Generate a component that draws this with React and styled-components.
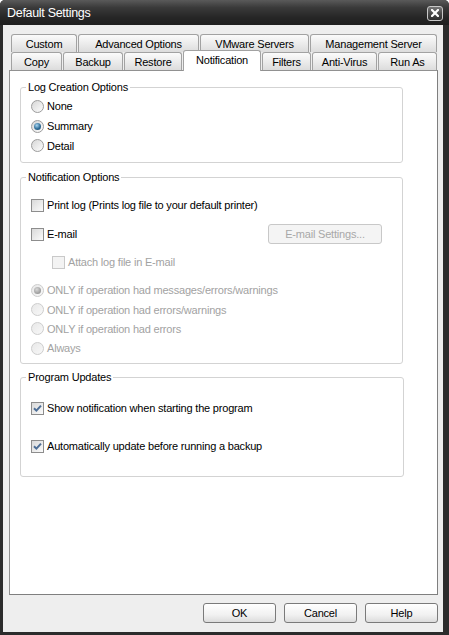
import React from "react"
import styled, {createGlobalStyle} from "styled-components"

const GlobalStyle = createGlobalStyle`
  html, body {
    margin: 0;
    padding: 0;
    background: #fff;
  }
  body {
    font-family: "Liberation Sans", Arial, sans-serif;
    font-size: 11px;
    letter-spacing: -0.2px;
    color: #000;
  }
  * {
    box-sizing: border-box;
  }
`

const backTabs = [
  {label: "Custom", w: 67},
  {label: "Advanced Options", w: 122},
  {label: "VMware Servers", w: 110},
  {label: "Management Server", w: 128},
]

const frontTabs = [
  {label: "Copy", w: 52},
  {label: "Backup", w: 61},
  {label: "Restore", w: 59},
  {label: "Notification", w: 79, active: true},
  {label: "Filters", w: 50},
  {label: "Anti-Virus", w: 66},
  {label: "Run As", w: 60},
]

const CheckMark = () => (
  <svg width="9" height="9" viewBox="0 0 9 9">
    <path d="M1 4.2 L3.4 6.6 L8 1.6" fill="none" stroke="#4d6e96" strokeWidth="2" />
  </svg>
)

const CloseIcon = () => (
  <svg width="8" height="8" viewBox="0 0 8 8">
    <path d="M1 1 L7 7 M7 1 L1 7" stroke="#fff" strokeWidth="2.2" strokeLinecap="square" />
  </svg>
)

const RadioItem = ({checked, disabled, children, ...rest}) => (
  <Row $disabled={disabled} {...rest}>
    <Radio $checked={checked} $disabled={disabled} />
    <span>{children}</span>
  </Row>
)

const CheckItem = ({checked, disabled, children, ...rest}) => (
  <Row $disabled={disabled} {...rest}>
    <Check $disabled={disabled}>{checked && <CheckMark />}</Check>
    <span>{children}</span>
  </Row>
)

const App = () => {
  return (
    <>
      <GlobalStyle />
      <Frame>
        <TitleBar>
          <Title>Default Settings</Title>
          <CloseButton>
            <CloseIcon />
          </CloseButton>
        </TitleBar>
        <Client>
          <TabRow>
            {backTabs.map((t) => (
              <Tab key={t.label} $w={t.w}>
                {t.label}
              </Tab>
            ))}
          </TabRow>
          <TabRow>
            {frontTabs.map((t) => (
              <Tab key={t.label} $w={t.w} $active={t.active}>
                {t.label}
              </Tab>
            ))}
          </TabRow>
          <Panel>
            <Group $mt={9} $pt={2} $pb={7}>
              <Legend>Log Creation Options</Legend>
              <RadioItem>None</RadioItem>
              <RadioItem checked>Summary</RadioItem>
              <RadioItem $h={19}>Detail</RadioItem>
            </Group>

            <Group $mt={7} $pt={11} $pb={5}>
              <Legend>Notification Options</Legend>
              <CheckItem>Print log (Prints log file to your default printer)</CheckItem>
              <Row $mt={9}>
                <Check />
                <span>E-mail</span>
                <Button $w={114} $disabled>
                  E-mail Settings...
                </Button>
              </Row>
              <CheckItem $mt={8} $indent={21} disabled>
                Attach log file in E-mail
              </CheckItem>
              <RadioItem $mt={8} checked disabled>
                ONLY if operation had messages/errors/warnings
              </RadioItem>
              <RadioItem $h={19} disabled>
                ONLY if operation had errors/warnings
              </RadioItem>
              <RadioItem $h={19} disabled>
                ONLY if operation had errors
              </RadioItem>
              <RadioItem disabled>Always</RadioItem>
            </Group>

            <Group $mt={6} $pt={14} $pb={20} $w={384}>
              <Legend>Program Updates</Legend>
              <CheckItem checked>Show notification when starting the program</CheckItem>
              <CheckItem $mt={18} checked>
                Automatically update before running a backup
              </CheckItem>
            </Group>
          </Panel>
          <Footer>
            <Button $w={73}>OK</Button>
            <Button $w={73}>Cancel</Button>
            <Button $w={73}>Help</Button>
          </Footer>
        </Client>
      </Frame>
    </>
  )
}

export default App

const Frame = styled.div`
  width: 449px;
  height: 635px;
  display: flex;
  flex-direction: column;
  background: #2c2c2c;
  border-radius: 5px 5px 0 0;
  overflow: hidden;
`
const TitleBar = styled.div`
  flex: none;
  height: 25px;
  display: flex;
  align-items: center;
  justify-content: space-between;
  padding: 1px 6px 0 7px;
  background: linear-gradient(#5a5a5a 0%, #3a3a3a 30%, #262626 70%, #1f1f1f 100%);
`
const Title = styled.span`
  color: #fff;
  font-size: 12.5px;
  letter-spacing: -0.3px;
`
const CloseButton = styled.div`
  width: 16px;
  height: 15px;
  display: flex;
  align-items: center;
  justify-content: center;
  border: 1px solid #c8c8c8;
  border-radius: 3px;
  background: linear-gradient(#777 0%, #4a4a4a 50%, #2e2e2e 100%);
`
const Client = styled.div`
  flex: 1;
  display: flex;
  flex-direction: column;
  margin: 0 6px 3px 3px;
  padding: 9px 5px 0 6px;
  background: #eeeeee;
`
const TabRow = styled.div`
  display: flex;
  height: 18px;
  padding-left: 2px;
`
const Tab = styled.div`
  flex: none;
  width: ${(p) => p.$w - 1}px;
  margin-right: 1px;
  display: flex;
  align-items: center;
  justify-content: center;
  border: 1px solid #a2a2a2;
  border-bottom: none;
  border-radius: 3px 3px 0 0;
  background: ${(p) =>
    p.$active ? "#fff" : "linear-gradient(#fbfbfb 0%, #ececec 50%, #dcdcdc 100%)"};
  height: ${(p) => (p.$active ? "21px" : "18px")};
  margin-top: ${(p) => (p.$active ? "-2px" : "0")};
  padding-bottom: ${(p) => (p.$active ? "3px" : "0")};
  position: relative;
  z-index: ${(p) => (p.$active ? 2 : 0)};
  white-space: nowrap;
`
const Panel = styled.div`
  height: 525px;
  display: flex;
  flex-direction: column;
  align-items: flex-start;
  padding-left: 10px;
  background: #fff;
  border: 1px solid #919191;
  border-right-color: #7f7f7f;
  border-bottom-color: #7f7f7f;
`
const Group = styled.fieldset`
  width: ${(p) => p.$w || 383}px;
  min-width: 0;
  margin: ${(p) => p.$mt}px 0 0 0;
  padding: ${(p) => p.$pt}px 20px ${(p) => p.$pb}px 10px;
  border: 1px solid #d3d3d3;
  border-radius: 3px;
`
const Legend = styled.legend`
  margin-left: -5px;
  padding: 0 2px;
  line-height: 14px;
  font-size: 11px;
`
const Row = styled.div`
  display: flex;
  align-items: center;
  gap: 3px;
  height: ${(p) => p.$h || 20}px;
  margin-top: ${(p) => p.$mt || 0}px;
  padding-left: ${(p) => p.$indent || 0}px;
  color: ${(p) => (p.$disabled ? "#a2a2a2" : "#000")};
  white-space: nowrap;
`
const Radio = styled.span`
  flex: none;
  width: 13px;
  height: 13px;
  display: flex;
  align-items: center;
  justify-content: center;
  border-radius: 50%;
  border: 1px solid ${(p) => (p.$disabled ? "#cdcdcd" : "#9c9c9c")};
  background: ${(p) =>
    p.$disabled ? "linear-gradient(135deg, #e8e8e8, #f8f8f8)" : "linear-gradient(135deg, #d6d6d6, #fdfdfd)"};

  &::after {
    content: "";
    display: ${(p) => (p.$checked ? "block" : "none")};
    width: 7px;
    height: 7px;
    border-radius: 50%;
    background: ${(p) =>
      p.$disabled
        ? "radial-gradient(circle at 40% 35%, #d8d8d8, #9a9a9a 70%)"
        : "radial-gradient(circle at 40% 35%, #a9d6f2, #2f6d97 55%, #1b4566 100%)"};
  }
`
const Check = styled.span`
  flex: none;
  width: 13px;
  height: 13px;
  display: flex;
  align-items: center;
  justify-content: center;
  border: 1px solid ${(p) => (p.$disabled ? "#c9c9c9" : "#8d8d8d")};
  background: ${(p) =>
    p.$disabled ? "#f3f3f3" : "linear-gradient(135deg, #d9d9d9, #fbfbfb)"};
`
const Button = styled.div`
  flex: none;
  width: ${(p) => p.$w}px;
  height: 20px;
  display: flex;
  align-items: center;
  justify-content: center;
  margin-left: ${(p) => (p.$disabled ? "auto" : "0")};
  border: 1px solid ${(p) => (p.$disabled ? "#c8c8c8" : "#7a7a7a")};
  border-radius: 3px;
  color: ${(p) => (p.$disabled ? "#a8a8a8" : "#000")};
  background: ${(p) =>
    p.$disabled ? "#f4f4f4" : "linear-gradient(#ffffff 0%, #f1f1f1 60%, #dcdcdc 100%)"};
`
const Footer = styled.div`
  display: flex;
  justify-content: flex-end;
  gap: 8px;
  margin-top: 8px;
`
